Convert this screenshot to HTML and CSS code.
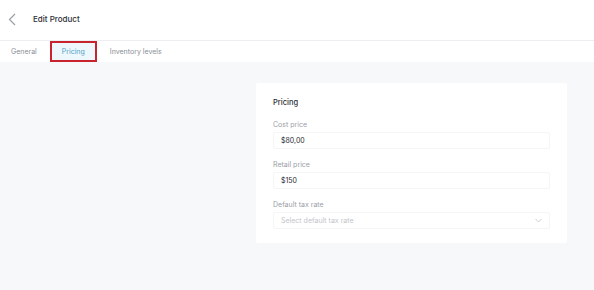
FILE: index.html
```html
<!DOCTYPE html>
<html>
<head>
<meta charset="utf-8">
<link rel="stylesheet" href="styles.css">
</head>
<body>
<div class="page">
  <header class="topbar">
    <svg class="back" width="8" height="13" viewBox="0 0 8 13"><path d="M7 1 L1.5 6.5 L7 12" fill="none" stroke="#9a9ea6" stroke-width="1.2"/></svg>
    <span class="title">Edit Product</span>
  </header>
  <nav class="tabs">
    <span class="tab">General</span>
    <span class="tab active">Pricing</span>
    <span class="tab">Inventory levels</span>
  </nav>
  <main class="content">
    <section class="card">
      <h2 class="card-title">Pricing</h2>
      <div class="field">
        <label class="label">Cost price</label>
        <div class="input">$80,00</div>
      </div>
      <div class="field">
        <label class="label">Retail price</label>
        <div class="input">$150</div>
      </div>
      <div class="field">
        <label class="label">Default tax rate</label>
        <div class="input select">
          <span class="placeholder">Select default tax rate</span>
          <svg width="7" height="5" viewBox="0 0 7 5"><path d="M0.5 1 L3.5 4 L6.5 1" fill="none" stroke="#c4c7cc" stroke-width="0.9"/></svg>
        </div>
      </div>
    </section>
  </main>
</div>
</body>
</html>
```
FILE: styles.css
```css
* { box-sizing: border-box; }
html, body { margin: 0; padding: 0; }
body {
  font-family: "Inter", "Noto Sans", sans-serif;
  background: #ffffff;
  color: #2b2d33;
  width: 594px;
  height: 290px;
  overflow: hidden;
}
.page { display: flex; flex-direction: column; height: 290px; }
.topbar {
  height: 41px;
  display: flex;
  align-items: center;
  padding-left: 8px;
  border-bottom: 1px solid #eceef1;
}
.back { margin-right: 17px; margin-top: -2px; }
.title { font-size: 8px; font-weight: 500; color: #2b2d33; margin-top: -3px; }
.tabs {
  height: 21px;
  display: flex;
  align-items: center;
  font-size: 7px;
  color: #8a8e96;
}
.tab { padding: 0 13px; }
.tab:first-child { padding-left: 11px; padding-right: 13px; }
.tab.active {
  color: #4fa3c7;
  background: #eef7fb;
  border: 2px solid #c9242d;
  height: 21px;
  width: 47px;
  display: flex;
  align-items: center;
  justify-content: center;
  padding: 0;
}
.content {
  flex: 1;
  background: #f7f8fa;
  padding: 21px 27px 0 256px;
}
.card {
  background: #ffffff;
  width: 311px;
  height: 160px;
  padding: 15px 17px 0 17px;
  border-radius: 2px;
}
.card-title { margin: 0 0 13px 0; font-size: 7.5px; font-weight: 500; color: #2b2d33; }
.field { margin-bottom: 11px; }
.label { display: block; font-size: 7px; color: #9a9ea6; margin-bottom: 3px; }
.input {
  height: 17px;
  border: 1px solid #f4f5f7;
  border-radius: 2px;
  width: 277px;
  display: flex;
  align-items: center;
  padding: 0 7px;
  font-size: 7px;
  color: #2b2d33;
}
.select { justify-content: space-between; }
.placeholder { color: #c2c5ca; }
```
